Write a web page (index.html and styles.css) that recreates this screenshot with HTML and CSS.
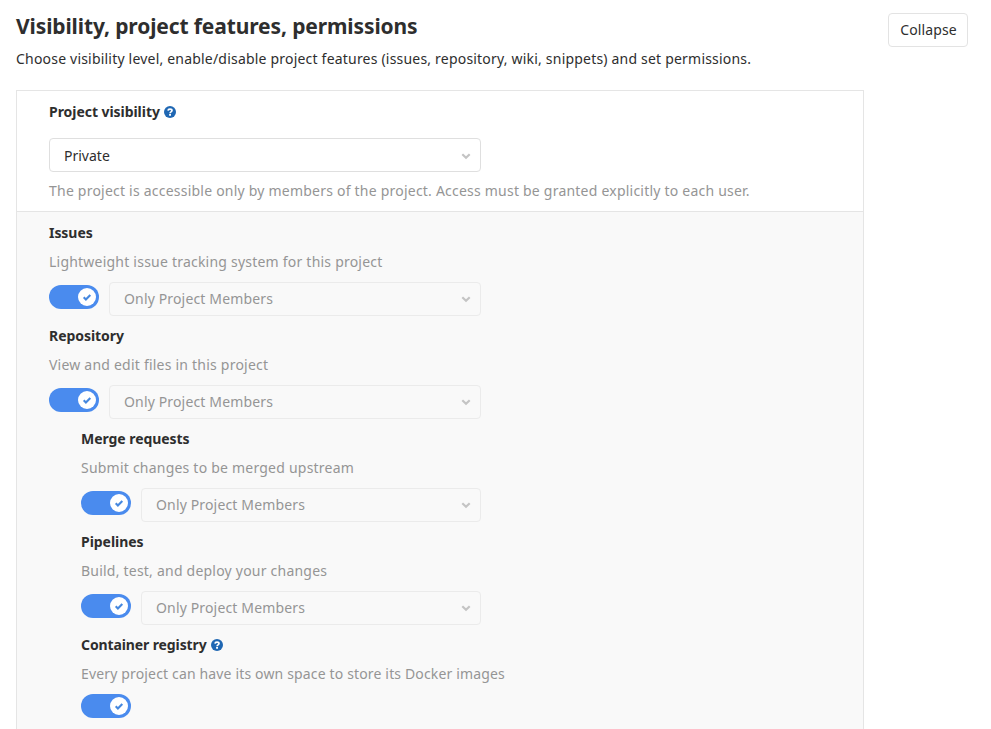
FILE: index.html
```html
<!DOCTYPE html>
<html lang="en">
<head>
<meta charset="utf-8">
<title>Visibility, project features, permissions</title>
<link rel="stylesheet" href="styles.css">
</head>
<body>
<svg class="defs" aria-hidden="true">
  <symbol id="chevron" viewBox="0 0 10 8"><path d="M1.300 2.200l3.700 3.500L8.700 2.200" fill="none" stroke="currentColor" stroke-width="2.200"/></symbol>
  <symbol id="help" viewBox="0 0 12 12"><circle cx="6" cy="6" r="6" fill="#1f67b3"/><path d="M4 4.600C4.100 3.500 5 3.100 6 3.100s2 .5 2 1.500C8 5.900 6.100 5.800 6.100 7.200" fill="none" stroke="#fff" stroke-width="1.700"/><path d="M5.100 8h1.900v1.700H5.100z" fill="#fff"/></symbol>
  <symbol id="knob" viewBox="0 0 18 18"><circle cx="9" cy="9" r="9" fill="#fff"/><path d="M5.700 9.200l2.200 2.200 4.400-4.500" fill="none" stroke="#4688df" stroke-width="2.100"/></symbol>
</svg>
<section class="settings">
  <header class="header">
    <div>
      <h1>Visibility, project features, permissions</h1>
      <p class="intro">Choose visibility level, enable/disable project features (issues, repository, wiki, snippets) and set permissions.</p>
    </div>
    <button class="collapse">Collapse</button>
  </header>
  <div class="panel">
    <div class="visibility">
      <h2>Project visibility <svg class="help"><use href="#help"/></svg></h2>
      <div class="select">Private<svg class="chevron"><use href="#chevron"/></svg></div>
      <p class="note">The project is accessible only by members of the project. Access must be granted explicitly to each user.</p>
    </div>
    <div class="features">
      <div class="row">
        <h2>Issues</h2><p class="note">Lightweight issue tracking system for this project</p>
        <div class="controls"><span class="toggle"><svg><use href="#knob"/></svg></span><div class="select disabled">Only Project Members<svg class="chevron"><use href="#chevron"/></svg></div></div>
      </div>
      <div class="row">
        <h2>Repository</h2><p class="note">View and edit files in this project</p>
        <div class="controls"><span class="toggle"><svg><use href="#knob"/></svg></span><div class="select disabled">Only Project Members<svg class="chevron"><use href="#chevron"/></svg></div></div>
      </div>
      <div class="row nested">
        <h2>Merge requests</h2><p class="note">Submit changes to be merged upstream</p>
        <div class="controls"><span class="toggle"><svg><use href="#knob"/></svg></span><div class="select disabled">Only Project Members<svg class="chevron"><use href="#chevron"/></svg></div></div>
      </div>
      <div class="row nested">
        <h2>Pipelines</h2><p class="note">Build, test, and deploy your changes</p>
        <div class="controls"><span class="toggle"><svg><use href="#knob"/></svg></span><div class="select disabled">Only Project Members<svg class="chevron"><use href="#chevron"/></svg></div></div>
      </div>
      <div class="row nested registry">
        <h2>Container registry <svg class="help"><use href="#help"/></svg></h2><p class="note">Every project can have its own space to store its Docker images</p>
        <div class="controls"><span class="toggle"><svg><use href="#knob"/></svg></span></div>
      </div>
    </div>
  </div>
</section>
</body>
</html>
```
FILE: styles.css
```css
* { box-sizing: border-box; }
body {
  margin: 0;
  height: 729px;
  overflow: hidden;
  background: #fff;
  color: #2e2e2e;
  font: 14px/20px "Noto Sans", sans-serif;
}
.defs { position: absolute; width: 0; height: 0; }
h1, h2, p { margin: 0; }
.settings { padding: 13px 23px 0 16px; }
.header { display: flex; justify-content: space-between; align-items: flex-start; height: 77px; }
h1 { font-size: 21px; line-height: 27px; margin-bottom: 9px; letter-spacing: -0.115px; }
.intro { letter-spacing: 0.2px; }
.collapse {
  width: 80px;
  height: 34px;
  padding: 0 0 0 1px;
  border: 1px solid #e3e3e3;
  border-radius: 4px;
  background: #fff;
  color: inherit;
  font: inherit;
  letter-spacing: 0.12px;
}
.panel { width: 848px; border: 1px solid #e5e5e5; border-bottom: 0; }
.visibility { height: 120px; padding: 11px 32px 0; }
h2 { display: flex; align-items: center; gap: 4px; font-size: 14px; line-height: 20px; letter-spacing: -0.05px; }
.help { width: 12px; height: 12px; }
.select {
  display: flex;
  align-items: center;
  justify-content: space-between;
  width: 432px;
  height: 34px;
  padding: 0 9px 0 14px;
  border: 1px solid #dfdfdf;
  border-radius: 4px;
  background: #fff;
}
.visibility .select { margin: 16px 0 9px; padding-top: 2px; }
.chevron { width: 10px; height: 8px; color: #c4c4c4; }
.note { color: #959595; letter-spacing: 0.22px; }
.features { height: 520px; padding: 11px 32px 0; border-top: 1px solid #e5e5e5; background: #f9f9f9; }
.row { width: 432px; height: 103px; white-space: nowrap; }
.row .note { margin-top: 9px; }
.controls { display: flex; gap: 10px; margin-top: 10px; }
.nested { padding-left: 32px; }
.toggle {
  display: flex;
  flex: none;
  align-items: center;
  justify-content: flex-end;
  width: 50px;
  height: 24px;
  margin-top: 3px;
  padding-right: 3px;
  border-radius: 12px;
  background: #4a8bee;
}
.toggle svg { width: 18px; height: 18px; }
.registry h2 { letter-spacing: -0.11px; }
.registry .toggle { margin-top: 0; }
.registry .note { letter-spacing: 0.155px; }
.disabled { flex: 1; width: auto; border-color: #ebebeb; background: #f9f9f9; color: #959595; letter-spacing: 0.15px; }
```
